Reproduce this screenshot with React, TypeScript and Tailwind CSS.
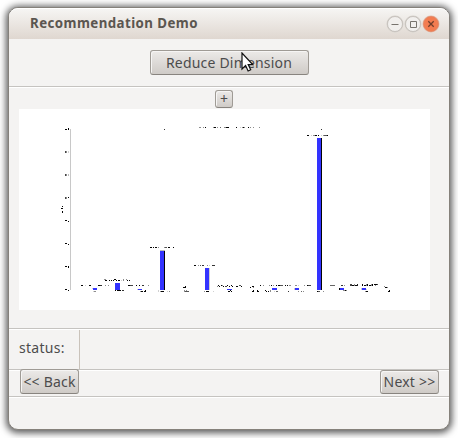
import React from "react";

type Run = [x: number, y: number, w: number, h?: number, shade?: string];

const bars: Run[] = [
  [93, 288, 4, 2], [115, 283, 5, 7], [138, 289, 4, 1], [160, 251, 4, 39], [205, 268, 4, 22],
  [227, 289, 5, 1], [272, 288, 5, 2], [295, 288, 4, 2], [317, 138, 4, 152], [340, 288, 4, 2], [362, 288, 4, 2],
];

const G = "#8c8c8c";
const L = "#d0d0d0";

const marks: Run[] = [
  // value axis
  [70, 129, 1, 161, "#c8c8c8"],
  [65, 129, 2], [68, 128, 1, 2], [65, 151, 1, 2, "#444"], [66, 151, 1, 2, G], [68, 151, 1, 2, L],
  [65, 174, 1, 2, "#444"], [66, 174, 1, 2, G], [68, 174, 1, 2, "#bbb"],
  [65, 197, 1, 2, "#444"], [66, 197, 1, 2, G], [68, 197, 1],
  [65, 220, 2], [68, 221, 1], [65, 243, 2], [68, 244, 1], [65, 266, 2], [68, 266, 1, 2], [65, 289, 2], [68, 290, 1],
  [62, 206, 1], [61, 208, 2], [62, 211, 1, 2],
  // title
  [199, 127, 2, 1, G], [203, 127, 1, 1, G], [205, 127, 1], [213, 127, 1, 1, G], [214, 127, 2], [217, 127, 1, 1, G],
  [220, 127, 1, 1, "#666"], [224, 127, 2, 1, G], [226, 127, 3], [236, 127, 1], [240, 127, 1, 1, L],
  [242, 127, 1, 1, G], [243, 127, 1], [244, 127, 1, 1, G], [248, 127, 1], [250, 127, 1, 1, G], [253, 127, 1, 1, G], [259, 127, 1, 1, G],
  [164, 129, 1, 1, "#333"], [321, 129, 1, 1, "#333"],
  // tallest bar
  [321, 138, 1, 152], [307, 135, 2], [311, 135, 1, 1, L], [313, 135, 2, 1, G], [315, 135, 2], [318, 135, 1],
  [321, 135, 1, 1, L], [323, 135, 1, 1, G], [324, 135, 3, 1, "#555"], [327, 135, 1],
  // second bar
  [160, 250, 5, 1, "#bbb"], [164, 251, 1, 39],
  [150, 247, 2], [153, 247, 1], [155, 247, 2], [158, 247, 1, 1, G], [164, 247, 1, 1, G], [165, 247, 2, 1, "#555"], [168, 247, 2], [173, 247, 1],
  // third bar
  [209, 268, 1, 22, L], [194, 265, 2], [198, 265, 1, 1, G], [200, 265, 1, 1, "#555"], [202, 265, 2, 1, "#333"],
  [207, 265, 1, 1, G], [209, 265, 1, 1, L], [212, 265, 3, 1, "#333"],
  // series labels, left
  [81, 285, 2], [85, 285, 1, 1, L], [89, 285, 2], [98, 285, 2], [100, 285, 2, 1, "#333"], [105, 285, 1, 1, G], [108, 285, 1, 1, G],
  [104, 279, 2, 1, G], [105, 280, 2], [109, 280, 1], [111, 280, 1], [114, 279, 2], [113, 280, 1], [116, 280, 1], [118, 280, 2],
  [121, 280, 1, 1, L], [123, 279, 1, 2, G], [126, 279, 1, 1, G], [127, 280, 1], [129, 280, 1],
  [128, 285, 2], [130, 285, 3, 1, "#444"], [136, 285, 1], [139, 285, 1], [142, 285, 2, 1, "#333"], [148, 285, 1, 1, G],
  // category labels, left
  [92, 288, 1, 1, L], [93, 291, 1, 1, L], [94, 291, 2, 1, G], [115, 290, 1], [117, 290, 4], [122, 290, 2, 1, "#333"],
  [137, 289, 1, 1, L], [140, 291, 1, 1, G], [141, 291, 2], [144, 291, 1], [145, 290, 1, 2], [158, 290, 1, 2, L],
  [160, 291, 1, 1, G], [161, 291, 3], [167, 291, 1, 1, L], [169, 291, 1, 1, G],
  // between second and third bars
  [183, 287, 3], [185, 286, 1], [184, 290, 1, 2, G], [185, 291, 4, 1, "#555"], [186, 290, 1, 1, G],
  [204, 291, 1, 1, G], [206, 291, 3], [213, 291, 1, 1, L],
  // middle labels
  [217, 286, 1, 1, G], [218, 285, 1], [219, 286, 1], [221, 285, 1], [222, 285, 1, 1, G], [223, 286, 1], [225, 286, 2, 1, "#444"],
  [227, 285, 1], [229, 286, 1], [231, 285, 1], [232, 286, 1], [236, 286, 2], [239, 285, 2, 1, "#555"], [241, 286, 1],
  [228, 291, 2], [231, 291, 1], [230, 290, 1], [250, 287, 1], [252, 286, 2], [253, 287, 1, 1, G],
  [252, 291, 2], [253, 290, 1], [257, 290, 1, 2], [258, 291, 1],
  // right labels
  [260, 285, 1], [263, 285, 1, 1, G], [269, 285, 1, 1, G], [271, 285, 1], [273, 285, 1, 1, G], [276, 285, 1],
  [278, 285, 2], [280, 285, 3, 1, "#555"], [285, 285, 1], [287, 285, 1], [289, 285, 2, 1, G], [295, 285, 2, 1, G], [298, 285, 1, 1, L],
  [265, 290, 1], [266, 291, 1], [268, 291, 1], [270, 290, 1, 2, G], [274, 291, 1, 1, L], [276, 291, 2, 1, "#666"], [288, 291, 1, 1, "#333"],
  [294, 288, 1, 2, L], [298, 291, 1, 1, G], [301, 291, 1, 1, "#666"], [303, 291, 1, 1, G],
  [304, 285, 1, 1, G], [307, 285, 1], [308, 285, 3, 1, "#444"], [317, 291, 1], [318, 291, 2, 1, "#555"], [323, 291, 1, 1, G],
  [330, 285, 5, 1, "#666"], [341, 285, 2, 1, "#333"], [344, 285, 1, 1, G],
  [339, 288, 1, 2], [343, 290, 2, 1, G], [345, 290, 2], [346, 290, 1, 1, G],
  [350, 284, 2, 2, "#444"], [352, 285, 2], [354, 284, 1, 2, G], [355, 285, 2], [357, 284, 1, 2, "#222"],
  [362, 284, 1, 2], [364, 285, 2], [366, 284, 1, 2, G], [367, 284, 1, 2], [369, 285, 2], [371, 284, 1, 2, G],
  [372, 284, 1, 2], [374, 284, 3, 1], [375, 285, 1, 1, G], [377, 284, 1, 1, "#444"],
  [361, 288, 1, 2, L], [366, 289, 1, 1, L], [365, 291, 1, 1, G], [366, 291, 2],
  [384, 286, 1, 1, G], [385, 287, 2], [387, 287, 1, 1, G], [388, 291, 2], [389, 290, 1],
];

function Chart() {
  return (
    <svg className="ml-[10px] block h-[201px] w-[411px] bg-white" viewBox="19 109 411 201" shapeRendering="crispEdges">
      {bars.map(([x, y, w, h]) => <rect key={x} x={x} y={y} width={w} height={h} fill="#3333ff" />)}
      {marks.map(([x, y, w, h = 1, shade = "#050505"], i) => <rect key={i} x={x} y={y} width={w} height={h} fill={shade} />)}
    </svg>
  );
}

function Button({ children, className }: { children: React.ReactNode; className: string }) {
  return (
    <button className={`flex shrink-0 items-center justify-center whitespace-nowrap rounded-[3px] border border-[#9f9b95] border-b-[#88847f] bg-linear-to-b from-[#eceae8] to-[#cfcbc7] text-[#4c4c4c] shadow-[inset_1px_1px_0_#f6f5f4] ${className}`}>
      {children}
    </button>
  );
}

function WindowControl({ kind }: { kind: "min" | "max" | "close" }) {
  const close = kind === "close";
  return (
    <svg className="size-[18px]" viewBox="0 0 18 18" fill="none">
      <circle cx="9" cy="9" r="8.5" fill={close ? "#e3b8a6" : "#d4d0cb"} />
      <circle cx="9" cy="9" r="7.5" fill={close ? "#f37c50" : "#f1efed"} stroke={close ? "#e1835f" : "#bbb6b0"} strokeWidth=".7" />
      {kind === "min" && <path d="M5.5 9.5h7" stroke="#77736d" />}
      {kind === "max" && <path d="M6.5 6.5h6v6h-6z" stroke="#77736d" />}
      {close && <path d="m6.3 6.3 5.4 5.4m0-5.4-5.4 5.4" stroke="#713e2b" strokeWidth="1.3" />}
    </svg>
  );
}

export default function App() {
  return (
    <div className="h-[438px] w-[458px] overflow-hidden bg-white pl-2 pt-[7px] font-['Noto_Sans','Open_Sans',sans-serif] text-[14px] text-[#4c4c4c]">
      <main className="relative flex h-[423px] w-[442px] flex-col overflow-visible rounded-[10px] border border-[#85817b] bg-[#f4f3f2] shadow-[0_1px_7px_2px_rgba(0,0,0,.65)]">
        <header className="flex h-[31px] shrink-0 items-center justify-between rounded-t-[9px] border-t border-white bg-linear-to-b from-[#f6f5f3] to-[#dfd7d0] pl-[21px] pr-[9px]">
          <h1 className="-mt-[2px] whitespace-nowrap text-[13.3px] leading-[18px] font-bold tracking-[0.43px] text-[#5b5650]">Recommendation Demo</h1>
          <div className="flex"><WindowControl kind="min" /><WindowControl kind="max" /><WindowControl kind="close" /></div>
        </header>
        <section className="flex h-[48px] shrink-0 justify-center border-b border-[#c5c3c0] pt-[11px]">
          <Button className="h-[25px] w-[159px] text-[14px] tracking-[0.2px]">Reduce Dimension</Button>
        </section>
        <section className="h-[242px] shrink-0 border-t border-b border-t-white border-b-[#c5c3c0] pt-[2px]">
          <Button className="mb-px ml-[206px] h-[18px] w-[18px] text-[14px] leading-none">+</Button>
          <Chart />
        </section>
        <section className="flex h-[41px] shrink-0 border-t border-b border-t-white border-b-[#c5c3c0]">
          <div className="flex w-[71px] items-center border-r border-[#c9c2ba] pb-[4px] pl-[10px] tracking-[0.3px]">status:</div>
        </section>
        <section className="flex h-[27px] shrink-0 items-start justify-between border-t border-b border-t-white border-b-[#c5c3c0] pl-[11px] pr-[10px]">
          <Button className="-mt-[2px] h-[25px] w-[59px] text-[14px] tracking-[0.2px]">&lt;&lt; Back</Button>
          <Button className="-mt-px h-[24px] w-[59px] pb-[2px] text-[14px] tracking-[0.2px]">Next &gt;&gt;</Button>
        </section>
        <footer className="flex-1 rounded-b-[9px] border-t border-white" />
        <svg className="absolute left-[232px] top-[44px] h-[21px] w-[13px]" viewBox="0 0 13 21">
          <path d="M1 1v16l3.6-3.4 2.5 5.4 2.6-1.2-2.5-5.2h4.5z" fill="white" stroke="#111" strokeWidth="1.2" />
        </svg>
      </main>
    </div>
  );
}
